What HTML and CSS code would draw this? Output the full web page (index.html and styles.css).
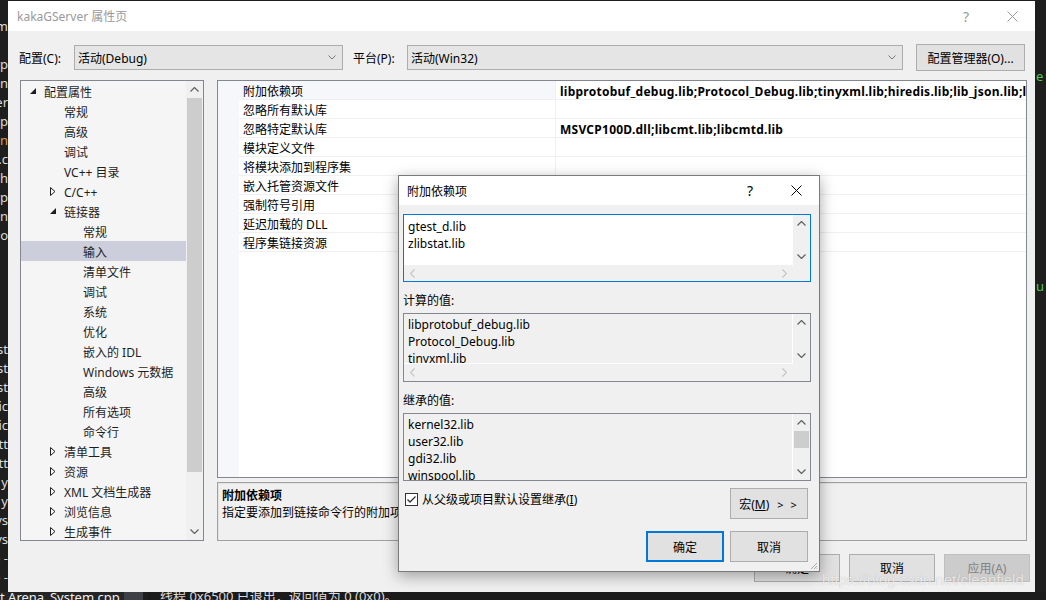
FILE: index.html
```html
<!DOCTYPE html>
<html lang="zh-CN">

<head>
    <meta charset="utf-8">
    <title>kakaGServer 属性页</title>
    <link rel="stylesheet" href="styles.css">
</head>

<body>
    <div class="desktop">
        <div class="edge-left">
            <div>m</div><div></div><div>rp</div><div>n</div><div>er</div><div>p</div>
            <div class="orange">n</div><div>.c</div><div>.h</div><div>rp</div><div>n</div><div>o</div>
            <div></div><div></div><div></div><div></div><div></div><div>st</div>
            <div>st</div><div>st</div><div>ic</div><div>ic</div><div>tt</div><div>tt</div>
            <div>y</div><div>y</div><div>ys</div><div>ys</div><div>p -</div><div>p -</div>
        </div>

        <div class="window">
            <div class="titlebar">
                <span class="title">kakaGServer 属性页</span>
                <span class="cap-btn help">?</span>
                <span class="cap-btn">
                    <svg width="11" height="11" viewBox="0 0 11 11"><path d="M0.5 0.5L10.5 10.5M10.5 0.5L0.5 10.5" stroke="#9a9a9a" stroke-width="1"/></svg>
                </span>
            </div>

            <div class="toolbar">
                <span class="tl-label">配置(C):</span>
                <div class="combo combo-config">
                    <span>活动(Debug)</span>
                    <svg class="combo-arrow" width="8" height="5" viewBox="0 0 8 5"><path d="M0.5 0.5L4 4L7.5 0.5" fill="none" stroke="#777"/></svg>
                </div>
                <span class="tl-label tl-platform">平台(P):</span>
                <div class="combo combo-platform">
                    <span>活动(Win32)</span>
                    <svg class="combo-arrow" width="8" height="5" viewBox="0 0 8 5"><path d="M0.5 0.5L4 4L7.5 0.5" fill="none" stroke="#777"/></svg>
                </div>
                <button class="btn btn-manager">配置管理器(O)...</button>
            </div>

            <div class="main">
                <div class="tree">
                    <ul class="tree-list">
                        <li class="lv0"><span class="tw"><svg width="6" height="6" viewBox="0 0 6 6"><path d="M6 0V6H0Z" fill="#1e1e1e"/></svg></span>配置属性</li>
                        <li class="lv1">常规</li>
                        <li class="lv1">高级</li>
                        <li class="lv1">调试</li>
                        <li class="lv1">VC++ 目录</li>
                        <li class="lv1t"><span class="tw"><svg width="6" height="9" viewBox="0 0 6 9"><path d="M0.5 0.5L5 4.5L0.5 8.5Z" fill="none" stroke="#1e1e1e"/></svg></span>C/C++</li>
                        <li class="lv1t"><span class="tw"><svg width="6" height="6" viewBox="0 0 6 6"><path d="M6 0V6H0Z" fill="#1e1e1e"/></svg></span>链接器</li>
                        <li class="lv2">常规</li>
                        <li class="lv2 selected">输入</li>
                        <li class="lv2">清单文件</li>
                        <li class="lv2">调试</li>
                        <li class="lv2">系统</li>
                        <li class="lv2">优化</li>
                        <li class="lv2">嵌入的 IDL</li>
                        <li class="lv2">Windows 元数据</li>
                        <li class="lv2">高级</li>
                        <li class="lv2">所有选项</li>
                        <li class="lv2">命令行</li>
                        <li class="lv1t"><span class="tw"><svg width="6" height="9" viewBox="0 0 6 9"><path d="M0.5 0.5L5 4.5L0.5 8.5Z" fill="none" stroke="#1e1e1e"/></svg></span>清单工具</li>
                        <li class="lv1t"><span class="tw"><svg width="6" height="9" viewBox="0 0 6 9"><path d="M0.5 0.5L5 4.5L0.5 8.5Z" fill="none" stroke="#1e1e1e"/></svg></span>资源</li>
                        <li class="lv1t"><span class="tw"><svg width="6" height="9" viewBox="0 0 6 9"><path d="M0.5 0.5L5 4.5L0.5 8.5Z" fill="none" stroke="#1e1e1e"/></svg></span>XML 文档生成器</li>
                        <li class="lv1t"><span class="tw"><svg width="6" height="9" viewBox="0 0 6 9"><path d="M0.5 0.5L5 4.5L0.5 8.5Z" fill="none" stroke="#1e1e1e"/></svg></span>浏览信息</li>
                        <li class="lv1t"><span class="tw"><svg width="6" height="9" viewBox="0 0 6 9"><path d="M0.5 0.5L5 4.5L0.5 8.5Z" fill="none" stroke="#1e1e1e"/></svg></span>生成事件</li>
                    </ul>
                    <div class="tree-scroll">
                        <span class="arrow-btn"><svg width="9" height="5" viewBox="0 0 9 5"><path d="M0.5 4.5L4.5 0.5L8.5 4.5" fill="none" stroke="#606060" stroke-width="1.2"/></svg></span>
                        <span class="tree-thumb"></span>
                        <span class="tree-track"></span>
                        <span class="arrow-btn"><svg width="9" height="5" viewBox="0 0 9 5"><path d="M0.5 0.5L4.5 4.5L8.5 0.5" fill="none" stroke="#606060" stroke-width="1.2"/></svg></span>
                    </div>
                </div>

                <div class="props">
                    <div class="grid">
                        <div class="gutter"></div>
                        <div class="rows">
                            <div class="row current"><span class="name">附加依赖项</span><span class="value">libprotobuf_debug.lib;Protocol_Debug.lib;tinyxml.lib;hiredis.lib;lib_json.lib;lua.lib;%(AdditionalDependencies)</span></div>
                            <div class="row"><span class="name">忽略所有默认库</span><span class="value"></span></div>
                            <div class="row"><span class="name">忽略特定默认库</span><span class="value">MSVCP100D.dll;libcmt.lib;libcmtd.lib</span></div>
                            <div class="row"><span class="name">模块定义文件</span><span class="value"></span></div>
                            <div class="row"><span class="name">将模块添加到程序集</span><span class="value"></span></div>
                            <div class="row"><span class="name">嵌入托管资源文件</span><span class="value"></span></div>
                            <div class="row"><span class="name">强制符号引用</span><span class="value"></span></div>
                            <div class="row"><span class="name">延迟加载的 DLL</span><span class="value"></span></div>
                            <div class="row"><span class="name">程序集链接资源</span><span class="value"></span></div>
                        </div>
                    </div>
                    <div class="desc">
                        <div class="desc-title">附加依赖项</div>
                        <div class="desc-text">指定要添加到链接命令行的附加项</div>
                    </div>
                </div>
            </div>

            <div class="footer">
                <button class="btn btn-foot">确定</button>
                <button class="btn btn-foot">取消</button>
                <button class="btn btn-foot" disabled>应用(A)</button>
            </div>

            <div class="dialog">
                <div class="dlg-title">
                    <span class="title">附加依赖项</span>
                    <span class="cap-btn help">?</span>
                    <span class="cap-btn">
                        <svg width="11" height="11" viewBox="0 0 11 11"><path d="M0.5 0.5L10.5 10.5M10.5 0.5L0.5 10.5" stroke="#000" stroke-width="1"/></svg>
                    </span>
                </div>
                <div class="dlg-body">
                    <div class="tbox editable">
                        <div class="tb-text">gtest_d.lib<br>zlibstat.lib</div>
                        <div class="vs">
                            <span class="arrow-btn"><svg width="9" height="5" viewBox="0 0 9 5"><path d="M0.5 4.5L4.5 0.5L8.5 4.5" fill="none" stroke="#606060" stroke-width="1.2"/></svg></span>
                            <span class="arrow-btn"><svg width="9" height="5" viewBox="0 0 9 5"><path d="M0.5 0.5L4.5 4.5L8.5 0.5" fill="none" stroke="#606060" stroke-width="1.2"/></svg></span>
                        </div>
                        <div class="hs">
                            <span class="arrow-btn"><svg width="5" height="9" viewBox="0 0 5 9"><path d="M4.5 0.5L0.5 4.5L4.5 8.5" fill="none" stroke="#c4c4c4" stroke-width="1.2"/></svg></span>
                            <span class="arrow-btn"><svg width="5" height="9" viewBox="0 0 5 9"><path d="M0.5 0.5L4.5 4.5L0.5 8.5" fill="none" stroke="#c4c4c4" stroke-width="1.2"/></svg></span>
                        </div>
                        <div class="corner"></div>
                    </div>

                    <div class="dlg-label">计算的值:</div>
                    <div class="tbox readonly">
                        <div class="tb-text">libprotobuf_debug.lib<br>Protocol_Debug.lib<br>tinyxml.lib</div>
                        <div class="vs">
                            <span class="arrow-btn"><svg width="9" height="5" viewBox="0 0 9 5"><path d="M0.5 4.5L4.5 0.5L8.5 4.5" fill="none" stroke="#606060" stroke-width="1.2"/></svg></span>
                            <span class="arrow-btn"><svg width="9" height="5" viewBox="0 0 9 5"><path d="M0.5 0.5L4.5 4.5L8.5 0.5" fill="none" stroke="#606060" stroke-width="1.2"/></svg></span>
                        </div>
                        <div class="hs">
                            <span class="arrow-btn"><svg width="5" height="9" viewBox="0 0 5 9"><path d="M4.5 0.5L0.5 4.5L4.5 8.5" fill="none" stroke="#c4c4c4" stroke-width="1.2"/></svg></span>
                            <span class="arrow-btn"><svg width="5" height="9" viewBox="0 0 5 9"><path d="M0.5 0.5L4.5 4.5L0.5 8.5" fill="none" stroke="#c4c4c4" stroke-width="1.2"/></svg></span>
                        </div>
                        <div class="corner"></div>
                    </div>

                    <div class="dlg-label">继承的值:</div>
                    <div class="tbox readonly no-hs">
                        <div class="tb-text">kernel32.lib<br>user32.lib<br>gdi32.lib<br>winspool.lib</div>
                        <div class="vs">
                            <span class="arrow-btn"><svg width="9" height="5" viewBox="0 0 9 5"><path d="M0.5 4.5L4.5 0.5L8.5 4.5" fill="none" stroke="#606060" stroke-width="1.2"/></svg></span>
                            <span class="vs-thumb"></span>
                            <span class="vs-track"></span>
                            <span class="arrow-btn"><svg width="9" height="5" viewBox="0 0 9 5"><path d="M0.5 0.5L4.5 4.5L8.5 0.5" fill="none" stroke="#606060" stroke-width="1.2"/></svg></span>
                        </div>
                    </div>

                    <div class="dlg-options">
                        <label class="check">
                            <svg width="13" height="13" viewBox="0 0 13 13"><rect x="0.5" y="0.5" width="12" height="12" fill="#fff" stroke="#333"/><path d="M2.5 6.5L5 9L10.5 3.5" fill="none" stroke="#333" stroke-width="1.3"/></svg>
                            <span>从父级或项目默认设置继承(<u>I</u>)</span>
                        </label>
                        <button class="btn btn-dlg">宏(<u>M</u>)<span class="more">&gt; &gt;</span></button>
                    </div>

                    <div class="dlg-actions">
                        <button class="btn btn-dlg default">确定</button>
                        <button class="btn btn-dlg">取消</button>
                    </div>
                </div>
                <svg class="grip" width="8" height="8" viewBox="0 0 8 8"><path d="M7 1L1 7M7 4L4 7M7 6.5L6.5 7" stroke="#a8a8a8" stroke-width="1"/></svg>
            </div>

            <div class="watermark">https://blog.csdn.net/cleanfield</div>
        </div>

        <div class="edge-right">
            <div class="green e1">e</div>
            <div class="green e2">u</div>
        </div>
    </div>

    <div class="statusbar">
        <div class="sb-file">t Arena_System.cpp</div>
        <div class="sb-box"></div>
        <div class="sb-output">线程 0x6500 已退出，返回值为 0 (0x0)。</div>
    </div>
</body>
</html>
```

FILE: styles.css
```css
body {
    margin: 0;
    width: 1046px;
    height: 600px;
    overflow: hidden;
    background-color: #1e1e1e;
    font-family: "Noto Sans", "Noto Sans CJK SC", sans-serif;
    font-size: 12px;
    color: #000;
}

button {
    font-family: inherit;
    font-size: 12px;
    color: #000;
    padding: 0;
}

.desktop {
    display: flex;
    height: 592px;
    padding-top: 1px;
    box-sizing: border-box;
}

/* editor bits behind the window */
.edge-left {
    width: 8px;
    overflow: hidden;
    padding-top: 16px;
    box-sizing: border-box;
    color: #dcdcdc;
    font-size: 13px;
}

.edge-left div {
    height: 19px;
    line-height: 19px;
    display: flex;
    justify-content: flex-end;
    white-space: nowrap;
}

.edge-left .orange {
    color: #d69d5c;
}

.edge-right {
    flex: 1;
    overflow: hidden;
    color: #4ec94e;
    font-size: 13px;
    padding-top: 66px;
}

.edge-right .e1 {
    padding-left: 1px;
}

.edge-right .e2 {
    margin-top: 192px;
    padding-left: 1px;
}

.statusbar {
    height: 8px;
    display: flex;
    overflow: hidden;
    color: #f1f1f1;
    font-size: 13px;
}

.sb-file {
    width: 124px;
    white-space: nowrap;
    line-height: 20px;
    margin-top: -5px;
    background-color: #252526;
}

.sb-box {
    width: 19px;
    background-color: #3f3f46;
}

.sb-output {
    flex: 1;
    margin-left: 5px;
    padding-left: 12px;
    white-space: nowrap;
    line-height: 20px;
    margin-top: -6px;
    color: #dcdcdc;
    background-color: #1b1b1c;
}

/* main window */
.window {
    width: 1027px;
    height: 591px;
    background-color: #f0f0f0;
    position: relative;
    display: flex;
    flex-direction: column;
}

.titlebar {
    height: 30px;
    background-color: #fff;
    display: flex;
    align-items: center;
    padding-left: 9px;
    color: #9a9a9a;
}

.titlebar .title {
    flex: 1;
}

.cap-btn {
    width: 46px;
    height: 30px;
    display: flex;
    align-items: center;
    justify-content: center;
}

.cap-btn.help {
    font-size: 14px;
}

.toolbar {
    display: flex;
    align-items: center;
    height: 25px;
    padding: 14px 0 10px 11px;
}

.tl-label {
    width: 55px;
}

.tl-platform {
    margin-left: 10px;
    width: 54px;
}

.combo {
    height: 25px;
    box-sizing: border-box;
    border: 1px solid #adadad;
    background-color: #e5e5e5;
    display: flex;
    align-items: center;
    padding: 0 6px 0 3px;
    justify-content: space-between;
}

.combo-config {
    width: 269px;
}

.combo-platform {
    width: 496px;
}

.btn {
    background-color: #e1e1e1;
    border: 1px solid #adadad;
    box-sizing: border-box;
}

.btn-manager {
    margin-left: 13px;
    width: 109px;
    height: 27px;
}

.main {
    display: flex;
    gap: 13px;
    height: 461px;
    padding: 0 8px 0 12px;
}

/* tree */
.tree {
    width: 184px;
    box-sizing: border-box;
    border: 1px solid #828790;
    background-color: #f5f5f5;
    display: flex;
    overflow: hidden;
}

.tree-list {
    list-style: none;
    margin: 0;
    padding: 0;
    flex: 1;
    color: #1e1e1e;
}

.tree-list li {
    height: 20px;
    line-height: 24px;
    display: flex;
    align-items: flex-start;
    white-space: nowrap;
}

.tree-list .lv0 {
    padding-left: 9px;
}

.tree-list .lv1 {
    padding-left: 43px;
}

.tree-list .lv1t {
    padding-left: 29px;
}

.tree-list .lv2 {
    padding-left: 62px;
}

.tree-list .selected {
    background-color: #cccedb;
}

.tw {
    width: 14px;
    height: 20px;
    display: flex;
    align-items: center;
}

.tree-scroll {
    width: 17px;
    display: flex;
    flex-direction: column;
    background-color: #f0f0f0;
}

.arrow-btn {
    height: 17px;
    display: flex;
    align-items: center;
    justify-content: center;
    flex-shrink: 0;
}

.tree-thumb {
    height: 374px;
    margin: 0 1px;
    background-color: #cdcdcd;
}

.tree-track {
    flex: 1;
}

/* property grid */
.props {
    width: 810px;
    display: flex;
    flex-direction: column;
    gap: 4px;
}

.grid {
    height: 398px;
    box-sizing: border-box;
    border: 1px solid #828790;
    background-color: #fff;
    display: flex;
}

.gutter {
    width: 21px;
    background-color: #f5f7fa;
}

.rows {
    flex: 1;
    overflow: hidden;
}

.row {
    display: flex;
    height: 18px;
    line-height: 22px;
    border-bottom: 1px solid #f0f0f0;
}

.row .name {
    width: 312px;
    height: 18px;
    padding-left: 4px;
    white-space: nowrap;
}

.row.current .name {
    background-color: #f5f7fa;
}

.row .value {
    flex: 1;
    height: 18px;
    border-left: 1px solid #f0f0f0;
    padding-left: 4px;
    font-weight: bold;
    letter-spacing: 0.25px;
    white-space: nowrap;
    overflow: hidden;
}

.desc {
    height: 59px;
    box-sizing: border-box;
    border: 1px solid #a0a0a0;
    box-shadow: inset 1px 1px 0 #e3e3e3;
    padding: 4px 4px 0;
    line-height: 17px;
    white-space: nowrap;
    overflow: hidden;
}

.desc-title {
    font-weight: bold;
}

.footer {
    display: flex;
    justify-content: flex-end;
    gap: 9px;
    padding: 13px 5px 0 0;
}

.btn-foot {
    width: 86px;
    height: 28px;
}

.btn-foot:disabled {
    background-color: #cccccc;
    border-color: #bfbfbf;
    color: #838383;
}

/* dialog */
.dialog {
    position: absolute;
    left: 390px;
    top: 174px;
    width: 422px;
    height: 397px;
    box-sizing: border-box;
    border: 1px solid #7a7a7a;
    background-color: #f0f0f0;
    box-shadow: 0 4px 14px rgba(0, 0, 0, 0.35);
}

.dlg-title {
    height: 29px;
    background-color: #fff;
    display: flex;
    align-items: center;
    padding-left: 8px;
}

.dlg-title .title {
    flex: 1;
}

.dlg-title .cap-btn {
    height: 29px;
}

.dlg-body {
    padding: 9px 8px 0 4px;
}

.tbox {
    height: 68px;
    box-sizing: border-box;
    border: 1px solid #828790;
    display: grid;
    grid-template-columns: 1fr 17px;
    grid-template-rows: 1fr 16px;
}

.tbox.editable {
    border-color: #0078d7;
    background-color: #fff;
}

.tbox.readonly {
    height: 69px;
    grid-template-rows: 1fr 17px;
}

.tbox.no-hs {
    height: 68px;
    grid-template-rows: 1fr;
}

.tb-text {
    padding: 3px 4px 0;
    line-height: 17px;
    overflow: hidden;
    white-space: nowrap;
}

.readonly .tb-text {
    padding-top: 2px;
    border-right: 1px solid #fff;
    border-bottom: 1px solid #fff;
}

.no-hs .tb-text {
    border-bottom: none;
}

.vs {
    background-color: #f0f0f0;
    display: flex;
    flex-direction: column;
    justify-content: space-between;
    overflow: hidden;
}

.vs-thumb {
    height: 17px;
    margin: 0 1px;
    background-color: #cdcdcd;
    flex-shrink: 0;
}

.vs-track {
    flex: 1;
}

.hs {
    background-color: #f0f0f0;
    display: flex;
    justify-content: space-between;
}

.hs .arrow-btn {
    width: 17px;
    height: auto;
}

.corner {
    background-color: #f0f0f0;
}

.dlg-label {
    padding-top: 10px;
    margin-bottom: 4px;
    line-height: 17px;
}

.dlg-options {
    display: flex;
    justify-content: space-between;
    margin-top: 7px;
    padding-right: 3px;
}

.check {
    display: flex;
    align-items: center;
    gap: 4px;
    height: 22px;
    padding-left: 2px;
}

.check svg {
    flex-shrink: 0;
}

.btn-dlg {
    width: 78px;
    height: 31px;
}

.btn-dlg .more {
    margin-left: 8px;
    letter-spacing: 2px;
    font-size: 11px;
}

.btn-dlg.default {
    border: 2px solid #0078d7;
}

.dlg-actions {
    display: flex;
    justify-content: flex-end;
    gap: 6px;
    margin-top: 12px;
    padding-right: 3px;
}

.grip {
    position: absolute;
    right: 1px;
    bottom: 1px;
}

.watermark {
    position: absolute;
    left: 814px;
    top: 570px;
    font-family: "Liberation Sans", Arial, sans-serif;
    font-size: 15px;
    color: rgba(255, 255, 255, 0.75);
    text-shadow: 0 0 1px rgba(0, 0, 0, 0.25);
    white-space: nowrap;
}
```
